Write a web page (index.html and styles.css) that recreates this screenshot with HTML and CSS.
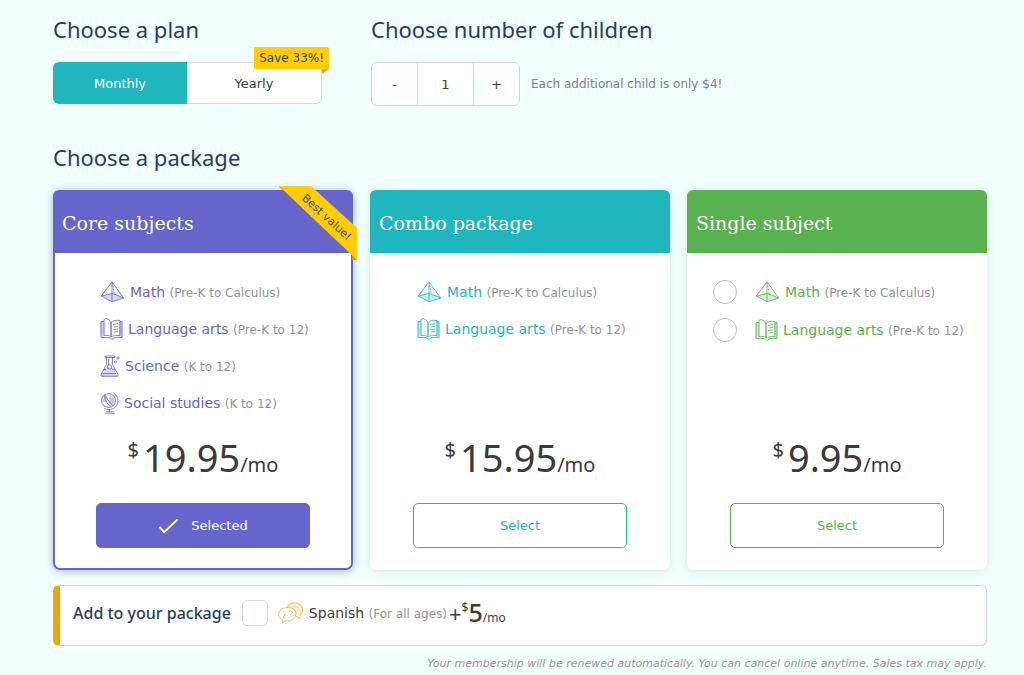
FILE: index.html
```html
<!DOCTYPE html>
<html lang="en">
  <head>
    <meta charset="UTF-8" />
    <meta name="viewport" content="width=device-width, initial-scale=1.0" />
    <title>Choose a plan</title>
    <link rel="stylesheet" href="styles.css">
  </head>
  <body>
    <!-- Shared icons -->
    <svg class="sprite" aria-hidden="true">
      <symbol id="icon-math" viewBox="0 0 24 22">
        <path d="M1 15l10.500 5.500L23 17l-11-4.500z" fill="currentColor" opacity=".25" />
        <path d="M11.500 .8L.8 15l10.700 5.800L23.200 17zM.8 15L12 12.500 23.200 17M11.500 1v19.500" />
        <path d="M12 1.500l1.500 11" stroke-dasharray="2 1" />
      </symbol>
      <symbol id="icon-book" viewBox="0 0 23 22">
        <path d="M1 4h3v14H1zM19 4h3v15h-3z" fill="currentColor" opacity=".3" />
        <path d="M4 3.500H1v16h8.500l1 1.500h3l1-1.500H22v-16h-2" />
        <path d="M4 17.500V1.500l2-1c3 1 5 2.500 5 5V19c-1-1.500-4-2-7-1.500M11 19V4.500c2-2 5-2.500 9-2v15c-4 0-7 0-9 1.500" />
        <path d="M13 6.500l5-1M14 9l4-.5M13 11.500l5-.5M14 14l4-.5" />
      </symbol>
      <symbol id="icon-science" viewBox="0 0 20 22">
        <path d="M4.500 13h9l4 8H1z" fill="currentColor" opacity=".25" />
        <path d="M5 1h10v1.500H5zM6.500 2.500v7L1 19.500c-.5 1 0 1.800 1 1.800h15c1 0 1.500-.8 1-1.800l-5.500-10v-7M8.500 4v6M4 14.500h2M12 14.500h3M3 18.500h13" />
        <circle cx="9.500" cy="12" r="2.200" />
        <circle cx="18" cy="3" r="1.200" />
        <circle cx="15.500" cy="7" r="1" />
      </symbol>
      <symbol id="icon-globe" viewBox="0 0 19 22">
        <circle cx="8.500" cy="8.500" r="7" />
        <path d="M5 3l3 3-1 3-3 1-1.500-3zM10 3l4 3v5l-3 3-2-4z" fill="currentColor" opacity=".35" />
        <path d="M4 3l9 11M5 2.500c-1 4 1 9 6 12M13.500 1c6 4 6 12 0 15.500-3 1.600-6 1.500-9 0M9.500 17.500V20M5 21.200h10M6 19.700h8" />
      </symbol>
      <symbol id="icon-speech" viewBox="0 0 26 22">
        <path d="M9 5c2-4 8-5 12-3 5 3 4 9 0 11l-3 0c0-5-4-8-9-8z" fill="currentColor" opacity=".25" />
        <path d="M9 5c2-4 8-5 12-3 5 3 4 9 1 11l0 3.500-4-2.500" />
        <path d="M5 18c-5-2-6-8-1-11 4-2.500 10-2 12.500 1 3 4 1 9-4 10.500-2 .6-4 .5-5 .3L4 21z" />
        <path d="M7.500 11l-1 2.500c-2 1.500-1 3.500 1 2.500M8 9v.5M11 10c0-2 4-1.500 3 .8l-2 2v1M11.500 15.500v.5" />
        <path d="M14 4.500h.5M17 4.500h.5M20 4.500h.5" />
      </symbol>
    </svg>

    <main class="page">
      <div class="options">
        <section>
          <h2>Choose a plan</h2>
          <div class="plan-toggle">
            <button type="button" class="plan active">Monthly</button>
            <button type="button" class="plan">Yearly</button>
            <span class="save-badge">Save 33%!</span>
          </div>
        </section>

        <section>
          <h2>Choose number of children</h2>
          <div class="children">
            <div class="stepper">
              <button type="button" aria-label="Remove a child">-</button>
              <input type="text" value="1" aria-label="Number of children" />
              <button type="button" aria-label="Add a child">+</button>
            </div>
            <span class="note">Each additional child is only $4!</span>
          </div>
        </section>
      </div>

      <h2>Choose a package</h2>
      <div class="packages">
        <section class="card core">
          <h3>Core subjects</h3>
          <svg class="ribbon" viewBox="0 0 78 74">
            <path d="M0 0v1l5 4h4zM73 68v6h5z" fill="#d8961a" />
            <path d="M0 0h32l46 42v32z" fill="#ffcc05" />
            <text x="48" y="35" text-anchor="middle" transform="rotate(42.500 48 31)">Best value!</text>
          </svg>
          <div class="card-body">
            <ul>
              <li><svg class="icon math"><use href="#icon-math" /></svg><span>Math <small>(Pre-K to Calculus)</small></span></li>
              <li><svg class="icon book"><use href="#icon-book" /></svg><span>Language arts <small>(Pre-K to 12)</small></span></li>
              <li><svg class="icon science"><use href="#icon-science" /></svg><span>Science <small>(K to 12)</small></span></li>
              <li><svg class="icon globe"><use href="#icon-globe" /></svg><span>Social studies <small>(K to 12)</small></span></li>
            </ul>
            <p class="price"><sup>$</sup><strong>19.95</strong><span>/mo</span></p>
            <button type="button" class="select selected">
              <svg class="check" viewBox="0 0 22 16"><path d="M1.500 9l5 5.500L20.500 1" /></svg>
              Selected
            </button>
          </div>
        </section>

        <section class="card combo">
          <h3>Combo package</h3>
          <div class="card-body">
            <ul>
              <li><svg class="icon math"><use href="#icon-math" /></svg><span>Math <small>(Pre-K to Calculus)</small></span></li>
              <li><svg class="icon book"><use href="#icon-book" /></svg><span>Language arts <small>(Pre-K to 12)</small></span></li>
            </ul>
            <p class="price"><sup>$</sup><strong>15.95</strong><span>/mo</span></p>
            <button type="button" class="select">Select</button>
          </div>
        </section>

        <section class="card single">
          <h3>Single subject</h3>
          <div class="card-body">
            <ul>
              <li>
                <input type="radio" name="subject" id="subjectMath" />
                <label for="subjectMath"><svg class="icon math"><use href="#icon-math" /></svg><span>Math <small>(Pre-K to Calculus)</small></span></label>
              </li>
              <li>
                <input type="radio" name="subject" id="subjectLanguage" />
                <label for="subjectLanguage"><svg class="icon book"><use href="#icon-book" /></svg><span>Language arts <small>(Pre-K to 12)</small></span></label>
              </li>
            </ul>
            <p class="price"><sup>$</sup><strong>9.95</strong><span>/mo</span></p>
            <button type="button" class="select">Select</button>
          </div>
        </section>
      </div>

      <section class="addon">
        <h4>Add to your package</h4>
        <input type="checkbox" id="spanish" />
        <label for="spanish">
          <svg class="icon speech"><use href="#icon-speech" /></svg>
          <span>Spanish <small>(For all ages)</small></span>
        </label>
        <p class="addon-price">+<sup>$</sup><strong>5</strong><span>/mo</span></p>
      </section>

      <p class="terms">Your membership will be renewed automatically. You can cancel online anytime. Sales tax may apply.</p>
    </main>
  </body>
</html>
```
FILE: styles.css
```css
* {
  box-sizing: border-box;
}

body {
  margin: 0;
  background-color: #f2ffff;
  color: #3c3c3c;
  font-family: Verdana, "DejaVu Sans", sans-serif;
  font-size: 13px;
}

button,
input {
  margin: 0;
  font: inherit;
  color: inherit;
}

button {
  cursor: pointer;
}

.sprite {
  display: none;
}

.page {
  padding: 14px 37px 0 53px;
}

h2 {
  margin: 0 0 18px;
  font-family: "Noto Sans", sans-serif;
  font-size: 22px;
  font-weight: 400;
  line-height: 30px;
  color: #263c68;
}

/* Plan and children */
.options {
  display: flex;
  gap: 49px;
  margin-bottom: 36px;
}

.plan-toggle {
  position: relative;
  display: flex;
  width: 269px;
  height: 42px;
}

.plan {
  flex: 1;
  border: 1px solid #d5d9d9;
  border-left: 0;
  border-radius: 0 6px 6px 0;
  background-color: #fff;
}

.plan.active {
  border: 0;
  border-radius: 6px 0 0 6px;
  background-color: #20b6be;
  color: #fff;
}

.save-badge {
  position: absolute;
  top: -15px;
  right: -7px;
  padding: 0 5px;
  border-radius: 2px 2px 0 2px;
  background-color: #ffcc05;
  font-size: 12px;
  line-height: 22px;
}

.save-badge::after {
  content: "";
  position: absolute;
  top: 100%;
  right: 0;
  border-top: 5px solid #e3a11c;
  border-right: 7px solid transparent;
}

.children {
  display: flex;
  align-items: center;
  gap: 11px;
}

.stepper {
  display: flex;
  height: 44px;
  border: 1px solid #d2d6d6;
  border-radius: 6px;
  overflow: hidden;
}

.stepper button {
  width: 45px;
  padding: 0;
  border: 0;
  background-color: #fbffff;
}

.stepper input {
  width: 57px;
  border: 1px solid #d2d6d6;
  border-width: 0 1px;
  background-color: #fff;
  text-align: center;
}

.note {
  font-size: 12px;
  color: #808080;
}

/* Packages */
.packages {
  display: grid;
  grid-template-columns: repeat(3, minmax(0, 1fr));
  gap: 17px;
}

.card {
  position: relative;
  display: flex;
  flex-direction: column;
  min-height: 380px;
  border-radius: 7px;
  background-color: #fff;
  box-shadow: 0 1px 8px rgba(0, 60, 60, 0.12);
}

.core {
  color: #6665cb;
  box-shadow: 0 1px 9px rgba(0, 40, 40, 0.35);
}

.combo {
  color: #20b6be;
}

.single {
  color: #59b14f;
}

.card h3 {
  margin: 0;
  padding: 3px 9px 0;
  border-radius: 6px 6px 0 0;
  background-color: currentColor;
  font-family: "Roboto Slab", "DejaVu Serif", serif;
  font-size: 19px;
  font-weight: 400;
  line-height: 60px;
  -webkit-text-fill-color: #fff;
}

.ribbon {
  position: absolute;
  top: -4px;
  right: -4px;
  width: 78px;
  height: 74px;
}

.ribbon text {
  fill: #4a4632;
  font-size: 11px;
}

.card-body {
  flex: 1;
  display: flex;
  flex-direction: column;
  padding: 20px 43px 22px;
}

.core .card-body {
  padding: 20px 41px 20px;
  border: 2px solid #6665cb;
  border-top: 0;
  border-radius: 0 0 7px 7px;
}

.card ul {
  margin: 0;
  padding: 0 0 0 4px;
  list-style: none;
  white-space: nowrap;
}

.card li,
.card label {
  display: flex;
  align-items: center;
  gap: 5px;
}

.card li {
  height: 37px;
  font-size: 14px;
}

.single ul {
  margin-left: -21px;
}

.single li {
  gap: 18px;
  height: 38px;
}

small {
  font-size: 12px;
  color: #929292;
}

.icon {
  flex: none;
  height: 22px;
  fill: none;
  stroke: currentColor;
  stroke-width: 0.8;
}

.math {
  width: 25px;
}

.book {
  width: 23px;
}

.science {
  width: 20px;
}

.globe {
  width: 19px;
}

.speech {
  width: 26px;
  color: #f3b53c;
}

input[type="radio"],
input[type="checkbox"] {
  flex: none;
  appearance: none;
  width: 24px;
  height: 24px;
  border: 1px solid #b9bdbd;
  border-radius: 50%;
  background-color: #fff;
}

.price {
  display: flex;
  align-items: baseline;
  justify-content: center;
  margin: auto 0 12px;
  font-family: "Noto Sans", sans-serif;
  font-size: 20px;
  line-height: 52px;
  color: #3a3a3a;
}

.price sup {
  align-self: flex-start;
  margin-right: 4px;
  font-size: 20px;
  line-height: 38px;
}

.price strong {
  font-size: 38px;
  font-weight: 400;
}

.select {
  display: flex;
  align-items: center;
  justify-content: center;
  gap: 12px;
  height: 45px;
  border: 1px solid currentColor;
  border-radius: 5px;
  background-color: #fff;
}

.select.selected {
  border-color: #6665cb;
  background-color: #6665cb;
  color: #fff;
}

.check {
  width: 21px;
  height: 16px;
  fill: none;
  stroke: #fff;
  stroke-width: 2;
}

/* Add-on bar */
.addon {
  display: flex;
  align-items: center;
  height: 61px;
  margin-top: 15px;
  padding: 0 13px 5px;
  border: 1px solid #cfd5d5;
  border-left: 7px solid #f2a307;
  border-radius: 6px;
  background-color: #fff;
}

.addon h4 {
  margin: 0 11px 0 0;
  font-family: "Noto Sans", sans-serif;
  font-size: 16px;
  font-weight: 500;
  color: #263c68;
}

.addon input[type="checkbox"] {
  width: 26px;
  height: 26px;
  margin-right: 10px;
  border-color: #d2dada;
  border-radius: 5px;
}

.addon label {
  display: flex;
  align-items: center;
  gap: 5px;
  font-size: 14px;
}

.addon-price {
  display: flex;
  align-items: baseline;
  margin: 4px 0 0 2px;
  font-family: "Noto Sans", sans-serif;
  font-size: 22px;
  line-height: 32px;
}

.addon-price sup {
  align-self: flex-start;
  font-size: 12px;
  line-height: 24px;
}

.addon-price strong {
  font-size: 25px;
  font-weight: 500;
}

.addon-price span {
  font-size: 12px;
}

.terms {
  margin: 10px 0 0;
  font-size: 11px;
  font-style: italic;
  line-height: 16px;
  text-align: right;
  color: #969696;
}
```
